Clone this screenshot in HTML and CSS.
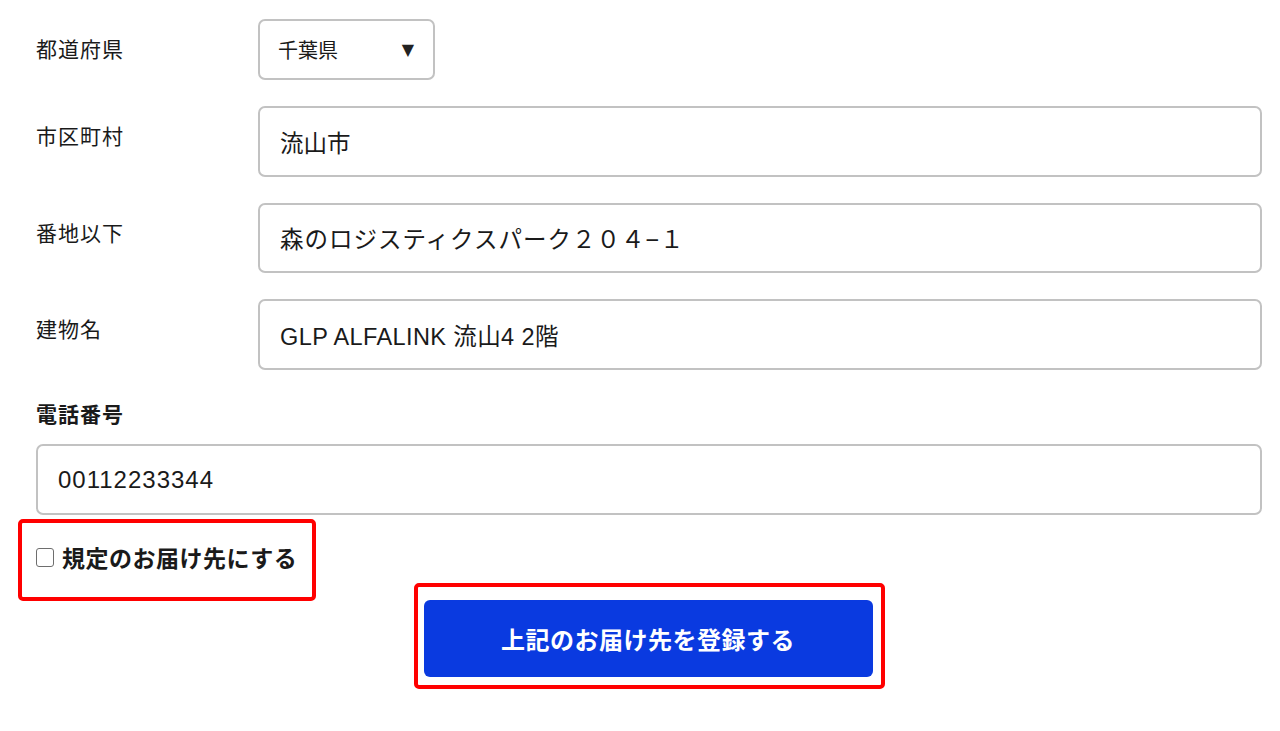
FILE: index.html
```html
<!DOCTYPE html>
<html lang="ja">
<head>
<meta charset="utf-8">
<title>お届け先登録</title>
<link rel="stylesheet" href="styles.css">
</head>
<body>
<form class="form">
  <div class="row">
    <label class="label">都道府県</label>
    <div class="select">
      <span class="select-value">千葉県</span>
      <span class="select-arrow">▼</span>
    </div>
  </div>
  <div class="row">
    <label class="label">市区町村</label>
    <input class="input" type="text" value="流山市">
  </div>
  <div class="row">
    <label class="label">番地以下</label>
    <input class="input input-short" type="text" value="森のロジスティクスパーク２０４−１">
  </div>
  <div class="row">
    <label class="label">建物名</label>
    <input class="input input-mixed" type="text" value="GLP ALFALINK 流山4 2階">
  </div>
  <div class="phone">
    <label class="label-bold">電話番号</label>
    <input class="input input-latin" type="text" value="00112233344">
  </div>
  <div class="check-box">
    <label class="check-label"><span class="checkbox"></span>規定のお届け先にする</label>
  </div>
  <div class="submit-wrap">
    <div class="submit-box">
      <button type="button" class="submit">上記のお届け先を登録する</button>
    </div>
  </div>
</form>
</body>
</html>
```

FILE: styles.css
```css
* { box-sizing: border-box; }
html, body { margin: 0; padding: 0; background: #fff; }
body {
  font-family: "Liberation Sans", "Noto Sans CJK JP", sans-serif;
  color: #1a1a1a;
}
.form {
  padding: 19px 18px 40px 36px;
  display: flex;
  flex-direction: column;
}
.row {
  display: grid;
  grid-template-columns: 222px 1fr;
  margin-bottom: 26px;
}
.label {
  font-family: "Noto Sans CJK JP", sans-serif;
  font-size: 21px;
  line-height: 30px;
  padding-top: 14px;
  letter-spacing: 1px;
}
.select {
  width: 177px;
  height: 61px;
  border: 2px solid #c2c2c2;
  border-radius: 7px;
  display: flex;
  align-items: center;
  justify-content: space-between;
  padding: 0 19px 0 18px;
}
.select-value {
  font-family: "Noto Sans CJK JP", sans-serif;
  font-size: 20px;
}
.select-arrow {
  font-family: "DejaVu Sans", sans-serif;
  font-size: 16px;
  color: #222;
}
.input {
  width: 100%;
  height: 71px;
  border: 2px solid #c2c2c2;
  border-radius: 7px;
  padding: 0 20px;
  font-family: "Liberation Sans", "Noto Sans CJK JP", sans-serif;
  font-size: 23.5px;
  color: #1a1a1a;
  background: #fff;
  outline: none;
}
.input-short { height: 70px; letter-spacing: 1px; }
.input-mixed { letter-spacing: 0.4px; }
.input-latin { font-size: 24px; letter-spacing: 1px; }
.phone {
  display: flex;
  flex-direction: column;
  gap: 16px;
  margin-top: 2px;
}
.label-bold {
  font-family: "Noto Sans CJK JP", sans-serif;
  font-weight: 700;
  font-size: 21px;
  line-height: 30px;
  letter-spacing: 1px;
}
.check-box {
  margin: 4px 0 0 -18px;
  width: 298px;
  height: 82px;
  border: 4px solid #ff0000;
  border-radius: 5px;
  padding: 19px 0 0 14px;
}
.check-label {
  display: flex;
  align-items: center;
  gap: 8px;
  font-family: "Noto Sans CJK JP", sans-serif;
  font-weight: 700;
  font-size: 23px;
  line-height: 30px;
  letter-spacing: 0.5px;
}
.checkbox {
  width: 18px;
  height: 19px;
  border: 1.5px solid #6e6e6e;
  border-radius: 3px;
  background: #fff;
  flex: none;
}
.submit-wrap {
  display: flex;
  justify-content: center;
  margin-top: -18px;
}
.submit-box {
  width: 471px;
  height: 106px;
  border: 4px solid #ff0000;
  border-radius: 5px;
  padding: 13px 8px 8px 6px;
}
.submit {
  width: 449px;
  height: 77px;
  border: none;
  border-radius: 6px;
  background: #0a3ae0;
  color: #fff;
  font-family: "Noto Sans CJK JP", sans-serif;
  font-weight: 700;
  font-size: 24px;
  letter-spacing: 0.5px;
  padding: 0;
  display: block;
}
```
